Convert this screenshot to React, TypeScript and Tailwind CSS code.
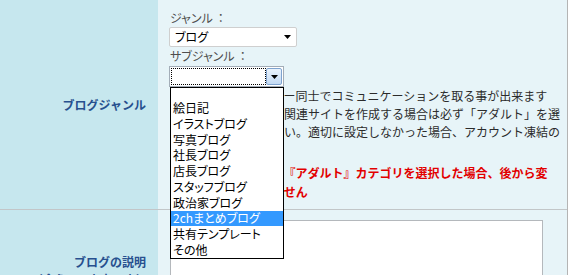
const SUB_GENRES = [
  "絵日記",
  "イラストブログ",
  "写真ブログ",
  "社長ブログ",
  "店長ブログ",
  "スタッフブログ",
  "政治家ブログ",
  "2chまとめブログ",
  "共有テンプレート",
  "その他",
];

const HIGHLIGHTED = "2chまとめブログ";

function Arrow() {
  return (
    <svg width="7" height="4" viewBox="0 0 7 4" className="block">
      <path d="M0 0h7L3.5 4z" fill="#000" />
    </svg>
  );
}

function GenreSelect() {
  return (
    <div className="flex h-[20px] w-[128px] items-center justify-between rounded-[2px] border border-[#cfcfcf] bg-white pl-[5px] pr-[5px] [font-feature-settings:'palt']">
      <span className="text-[12px] leading-none text-black">ブログ</span>
      <Arrow />
    </div>
  );
}

function SubGenreSelect() {
  return (
    <div className="relative w-[115px]">
      <div className="flex h-[21px] w-[115px] border border-[#a3adb8] bg-white p-px">
        <div className="flex-1 border border-dotted border-black" />
        <div className="flex w-[16px] items-center justify-center rounded-[2px] border border-[#7fa3cf] bg-gradient-to-b from-[#eaf3fc] to-[#c3daf4]">
          <Arrow />
        </div>
      </div>
      {/* open option list, drawn over the rows below */}
      <ul className="absolute left-px top-full z-10 w-[114px] border border-black bg-white text-[12px] text-black [font-feature-settings:'palt']">
        <li className="h-[12px]" />
        {SUB_GENRES.map((g) => (
          <li
            key={g}
            className={
              g === HIGHLIGHTED
                ? "flex h-[15.8px] items-center bg-[#3399ff] pl-[2px] text-white"
                : "flex h-[15.8px] items-center pl-[2px]"
            }
          >
            {g}
          </li>
        ))}
      </ul>
    </div>
  );
}

function FieldLabel({ text }: { text: string }) {
  return (
    <div className="pl-px text-[#4d4d4d] [font-feature-settings:'palt']">
      {text}
      <span className="ml-[5px]">：</span>
    </div>
  );
}

export default function App() {
  return (
    <div className="h-[275px] w-[575px] overflow-hidden bg-white font-['Noto_Sans_CJK_JP','Noto_Sans',sans-serif]">
      <div className="w-[568px] border-r border-[#b4b4b4]">
        <div className="flex border-b border-[#c2c6c8]">
          <div className="flex w-[158px] shrink-0 items-center justify-end bg-[#c6e7ee] pr-[12px] text-[12px] font-bold text-[#27508f]">
            ブログジャンル
          </div>
          <div className="flex-1 bg-[#e7f4f8] pb-[8px] pl-[11px] pt-[9px] text-[12px] leading-[18px]">
            <FieldLabel text="ジャンル" />
            <GenreSelect />
            <FieldLabel text="サブジャンル" />
            <div className="mt-[1px]">
              <SubGenreSelect />
            </div>
            <div className="ml-[7px] whitespace-nowrap text-[#2b2b2b]">
              <div>同ジャンルのブロガー同士でコミュニケーションを取る事が出来ます</div>
              <div>また、各種アダルト関連サイトを作成する場合は必ず「アダルト」を選</div>
              <div>択の上ご利用ください。適切に設定しなかった場合、アカウント凍結の</div>
            </div>
            <div className="ml-[7px] mt-[22px] whitespace-nowrap font-bold leading-[19px] text-[#e20000]">
              <div>※ブログジャンルで『アダルト』カテゴリを選択した場合、後から変</div>
              <div>更することはできません</div>
            </div>
          </div>
        </div>
        <div className="flex">
          <div className="flex w-[158px] shrink-0 flex-col items-end justify-center bg-[#c6e7ee] pr-[10px] text-right text-[12px] font-bold leading-[18px] text-[#27508f]">
            <div className="pr-[2px]">ブログの説明</div>
            <div>（全角100文字以内）</div>
          </div>
          <div className="flex-1 bg-[#e7f4f8] py-[10px] pl-[12px]">
            <div className="h-[102px] w-[373px] border border-[#b4b8bc] bg-white" />
          </div>
        </div>
      </div>
    </div>
  );
}
